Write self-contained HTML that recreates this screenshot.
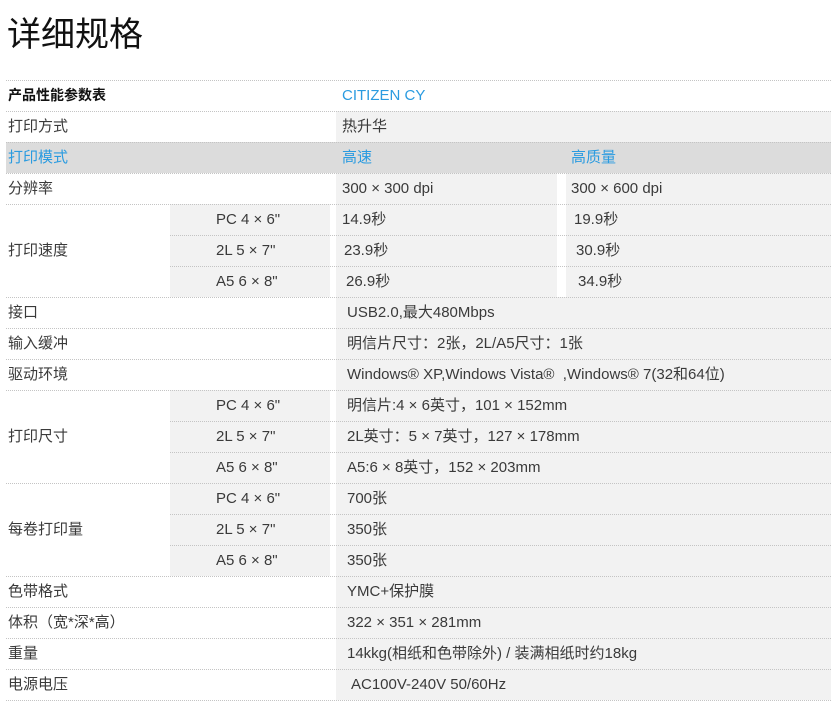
<!DOCTYPE html>
<html><head><meta charset="utf-8"><style>
body{margin:0;width:837px;height:722px;background:#fff;position:relative;overflow:hidden;font-family:"Liberation Sans","Noto Sans CJK SC",sans-serif;color:#3a3a3a;}
.t{position:absolute;left:7px;top:8px;font-size:34px;color:#111;line-height:48px;font-family:"Noto Sans CJK SC",sans-serif;}
.bg{position:absolute;background:#f2f2f2;height:31px;}
.ln{position:absolute;left:6px;width:825px;height:0;border-top:1px dotted #c4c4c4;}
.x{position:absolute;font-size:15px;line-height:31px;white-space:nowrap;}
.b{color:#2a9be0}
</style></head><body>
<div class="t">详细规格</div>

<div class="bg" style="left:336px;width:495px;top:111px"></div>
<div class="bg" style="left:6px;width:825px;top:142px;background:#dcdcdc"></div>
<div class="bg" style="left:336px;width:221px;top:173px"></div>
<div class="bg" style="left:566px;width:265px;top:173px"></div>

<div class="bg" style="left:170px;width:160px;top:204px;height:93px"></div>
<div class="bg" style="left:336px;width:221px;top:204px;height:93px"></div>
<div class="bg" style="left:566px;width:265px;top:204px;height:93px"></div>

<div class="bg" style="left:336px;width:495px;top:297px;height:93px"></div>
<div class="bg" style="left:170px;width:160px;top:390px;height:186px"></div>
<div class="bg" style="left:336px;width:495px;top:390px;height:186px"></div>
<div class="bg" style="left:336px;width:495px;top:576px;height:124px"></div>

<div class="ln" style="top:80px"></div>
<div class="ln" style="top:111px"></div>
<div class="ln" style="top:142px"></div>
<div class="ln" style="top:173px"></div>
<div class="ln" style="top:204px"></div>
<div class="ln" style="top:235px;left:170px;width:661px"></div>
<div class="ln" style="top:266px;left:170px;width:661px"></div>
<div class="ln" style="top:297px"></div>
<div class="ln" style="top:328px"></div>
<div class="ln" style="top:359px"></div>
<div class="ln" style="top:390px"></div>
<div class="ln" style="top:421px;left:170px;width:661px"></div>
<div class="ln" style="top:452px;left:170px;width:661px"></div>
<div class="ln" style="top:483px"></div>
<div class="ln" style="top:514px;left:170px;width:661px"></div>
<div class="ln" style="top:545px;left:170px;width:661px"></div>
<div class="ln" style="top:576px"></div>
<div class="ln" style="top:607px"></div>
<div class="ln" style="top:638px"></div>
<div class="ln" style="top:669px"></div>
<div class="ln" style="top:700px"></div>

<div class="x" style="left:8px;top:80px;font-weight:bold;color:#111;font-size:14px">产品性能参数表</div>
<div class="x b" style="left:342px;top:80px;font-size:15px">CITIZEN CY</div>
<div class="x" style="left:8px;top:111px">打印方式</div>
<div class="x" style="left:342px;top:111px">热升华</div>
<div class="x b" style="left:8px;top:142px">打印模式</div>
<div class="x b" style="left:342px;top:142px">高速</div>
<div class="x b" style="left:571px;top:142px">高质量</div>
<div class="x" style="left:8px;top:173px">分辨率</div>
<div class="x" style="left:342px;top:173px">300 × 300 dpi</div>
<div class="x" style="left:571px;top:173px">300 × 600 dpi</div>

<div class="x" style="left:8px;top:235px">打印速度</div>
<div class="x" style="left:216px;top:204px">PC 4 × 6"</div>
<div class="x" style="left:216px;top:235px">2L 5 × 7"</div>
<div class="x" style="left:216px;top:266px">A5 6 × 8"</div>
<div class="x" style="left:342px;top:204px">14.9秒</div>
<div class="x" style="left:344px;top:235px">23.9秒</div>
<div class="x" style="left:346px;top:266px">26.9秒</div>
<div class="x" style="left:574px;top:204px">19.9秒</div>
<div class="x" style="left:576px;top:235px">30.9秒</div>
<div class="x" style="left:578px;top:266px">34.9秒</div>

<div class="x" style="left:8px;top:297px">接口</div>
<div class="x" style="left:347px;top:297px">USB2.0,最大480Mbps</div>
<div class="x" style="left:8px;top:328px">输入缓冲</div>
<div class="x" style="left:347px;top:328px">明信片尺寸：2张，2L/A5尺寸：1张</div>
<div class="x" style="left:8px;top:359px">驱动环境</div>
<div class="x" style="left:347px;top:359px">Windows® XP,Windows Vista®&nbsp; ,Windows® 7(32和64位)</div>

<div class="x" style="left:8px;top:421px">打印尺寸</div>
<div class="x" style="left:216px;top:390px">PC 4 × 6"</div>
<div class="x" style="left:216px;top:421px">2L 5 × 7"</div>
<div class="x" style="left:216px;top:452px">A5 6 × 8"</div>
<div class="x" style="left:347px;top:390px">明信片:4 × 6英寸，101 × 152mm</div>
<div class="x" style="left:347px;top:421px">2L英寸：5 × 7英寸，127 × 178mm</div>
<div class="x" style="left:347px;top:452px">A5:6 × 8英寸，152 × 203mm</div>

<div class="x" style="left:8px;top:514px">每卷打印量</div>
<div class="x" style="left:216px;top:483px">PC 4 × 6"</div>
<div class="x" style="left:216px;top:514px">2L 5 × 7"</div>
<div class="x" style="left:216px;top:545px">A5 6 × 8"</div>
<div class="x" style="left:347px;top:483px">700张</div>
<div class="x" style="left:347px;top:514px">350张</div>
<div class="x" style="left:347px;top:545px">350张</div>

<div class="x" style="left:8px;top:576px">色带格式</div>
<div class="x" style="left:347px;top:576px">YMC+保护膜</div>
<div class="x" style="left:8px;top:607px">体积（宽*深*高）</div>
<div class="x" style="left:347px;top:607px">322 × 351 × 281mm</div>
<div class="x" style="left:8px;top:638px">重量</div>
<div class="x" style="left:347px;top:638px">14kkg(相纸和色带除外) / 装满相纸时约18kg</div>
<div class="x" style="left:8px;top:669px">电源电压</div>
<div class="x" style="left:351px;top:669px">AC100V-240V 50/60Hz</div>
</body></html>
